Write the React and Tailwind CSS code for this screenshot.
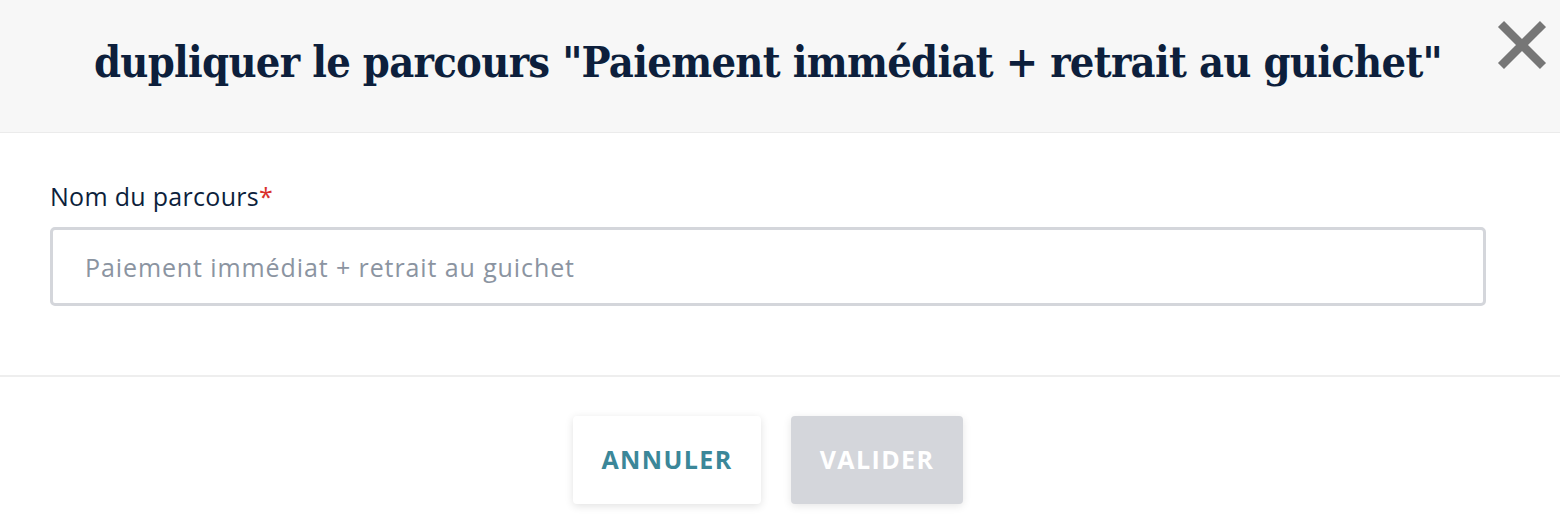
export default function App() {
  return (
    <div className="w-[1560px] h-[524px] bg-white overflow-hidden font-['Open_Sans','Lato',sans-serif]">
      {/* Header */}
      <div className="relative h-[133px] bg-[#f7f7f7] border-b border-[#ebebeb] flex items-center justify-center">
        <h1 className="text-[43px] font-bold text-[#0d1f3c] tracking-[-0.7px] font-['DejaVu_Serif_Condensed','DejaVu_Serif',serif] leading-none pb-[8px] pr-[24px]">
          dupliquer le parcours "Paiement immédiat + retrait au guichet"
        </h1>
        <button className="absolute right-[13px] top-[20px]">
          <svg width="50" height="50" viewBox="0 0 50 50">
            <path d="M4 4 L46 46 M46 4 L4 46" stroke="#767676" strokeWidth="8.5" strokeLinecap="butt" />
          </svg>
        </button>
      </div>

      {/* Body */}
      <div className="px-[50px] pt-[47px] pb-[69px] border-b-2 border-[#eeeeee]">
        <label className="block text-[25px] tracking-[0.3px] text-[#0d1f3c] leading-[32px] mb-[15px]">
          Nom du parcours<span className="text-[#d9302c]">*</span>
        </label>
        <input
          className="w-[1436px] h-[79px] border-[3px] border-[#d4d6db] rounded-[5px] px-[32px] text-[25px] tracking-[0.9px] text-[#0d1f3c] placeholder:text-[#8b94a1] outline-none"
          placeholder="Paiement immédiat + retrait au guichet"
        />
      </div>

      {/* Footer */}
      <div className="flex justify-center gap-[30px] pt-[39px] pr-[24px]">
        <button className="w-[188px] h-[88px] bg-white rounded-[4px] shadow-[0_2px_8px_rgba(0,0,0,0.12)] text-[25px] font-bold tracking-[1.4px] text-[#3b8799]">
          ANNULER
        </button>
        <button className="w-[172px] h-[88px] bg-[#d4d6db] rounded-[4px] shadow-[0_2px_8px_rgba(0,0,0,0.1)] text-[25px] font-bold tracking-[1.4px] text-white">
          VALIDER
        </button>
      </div>
    </div>
  )
}
